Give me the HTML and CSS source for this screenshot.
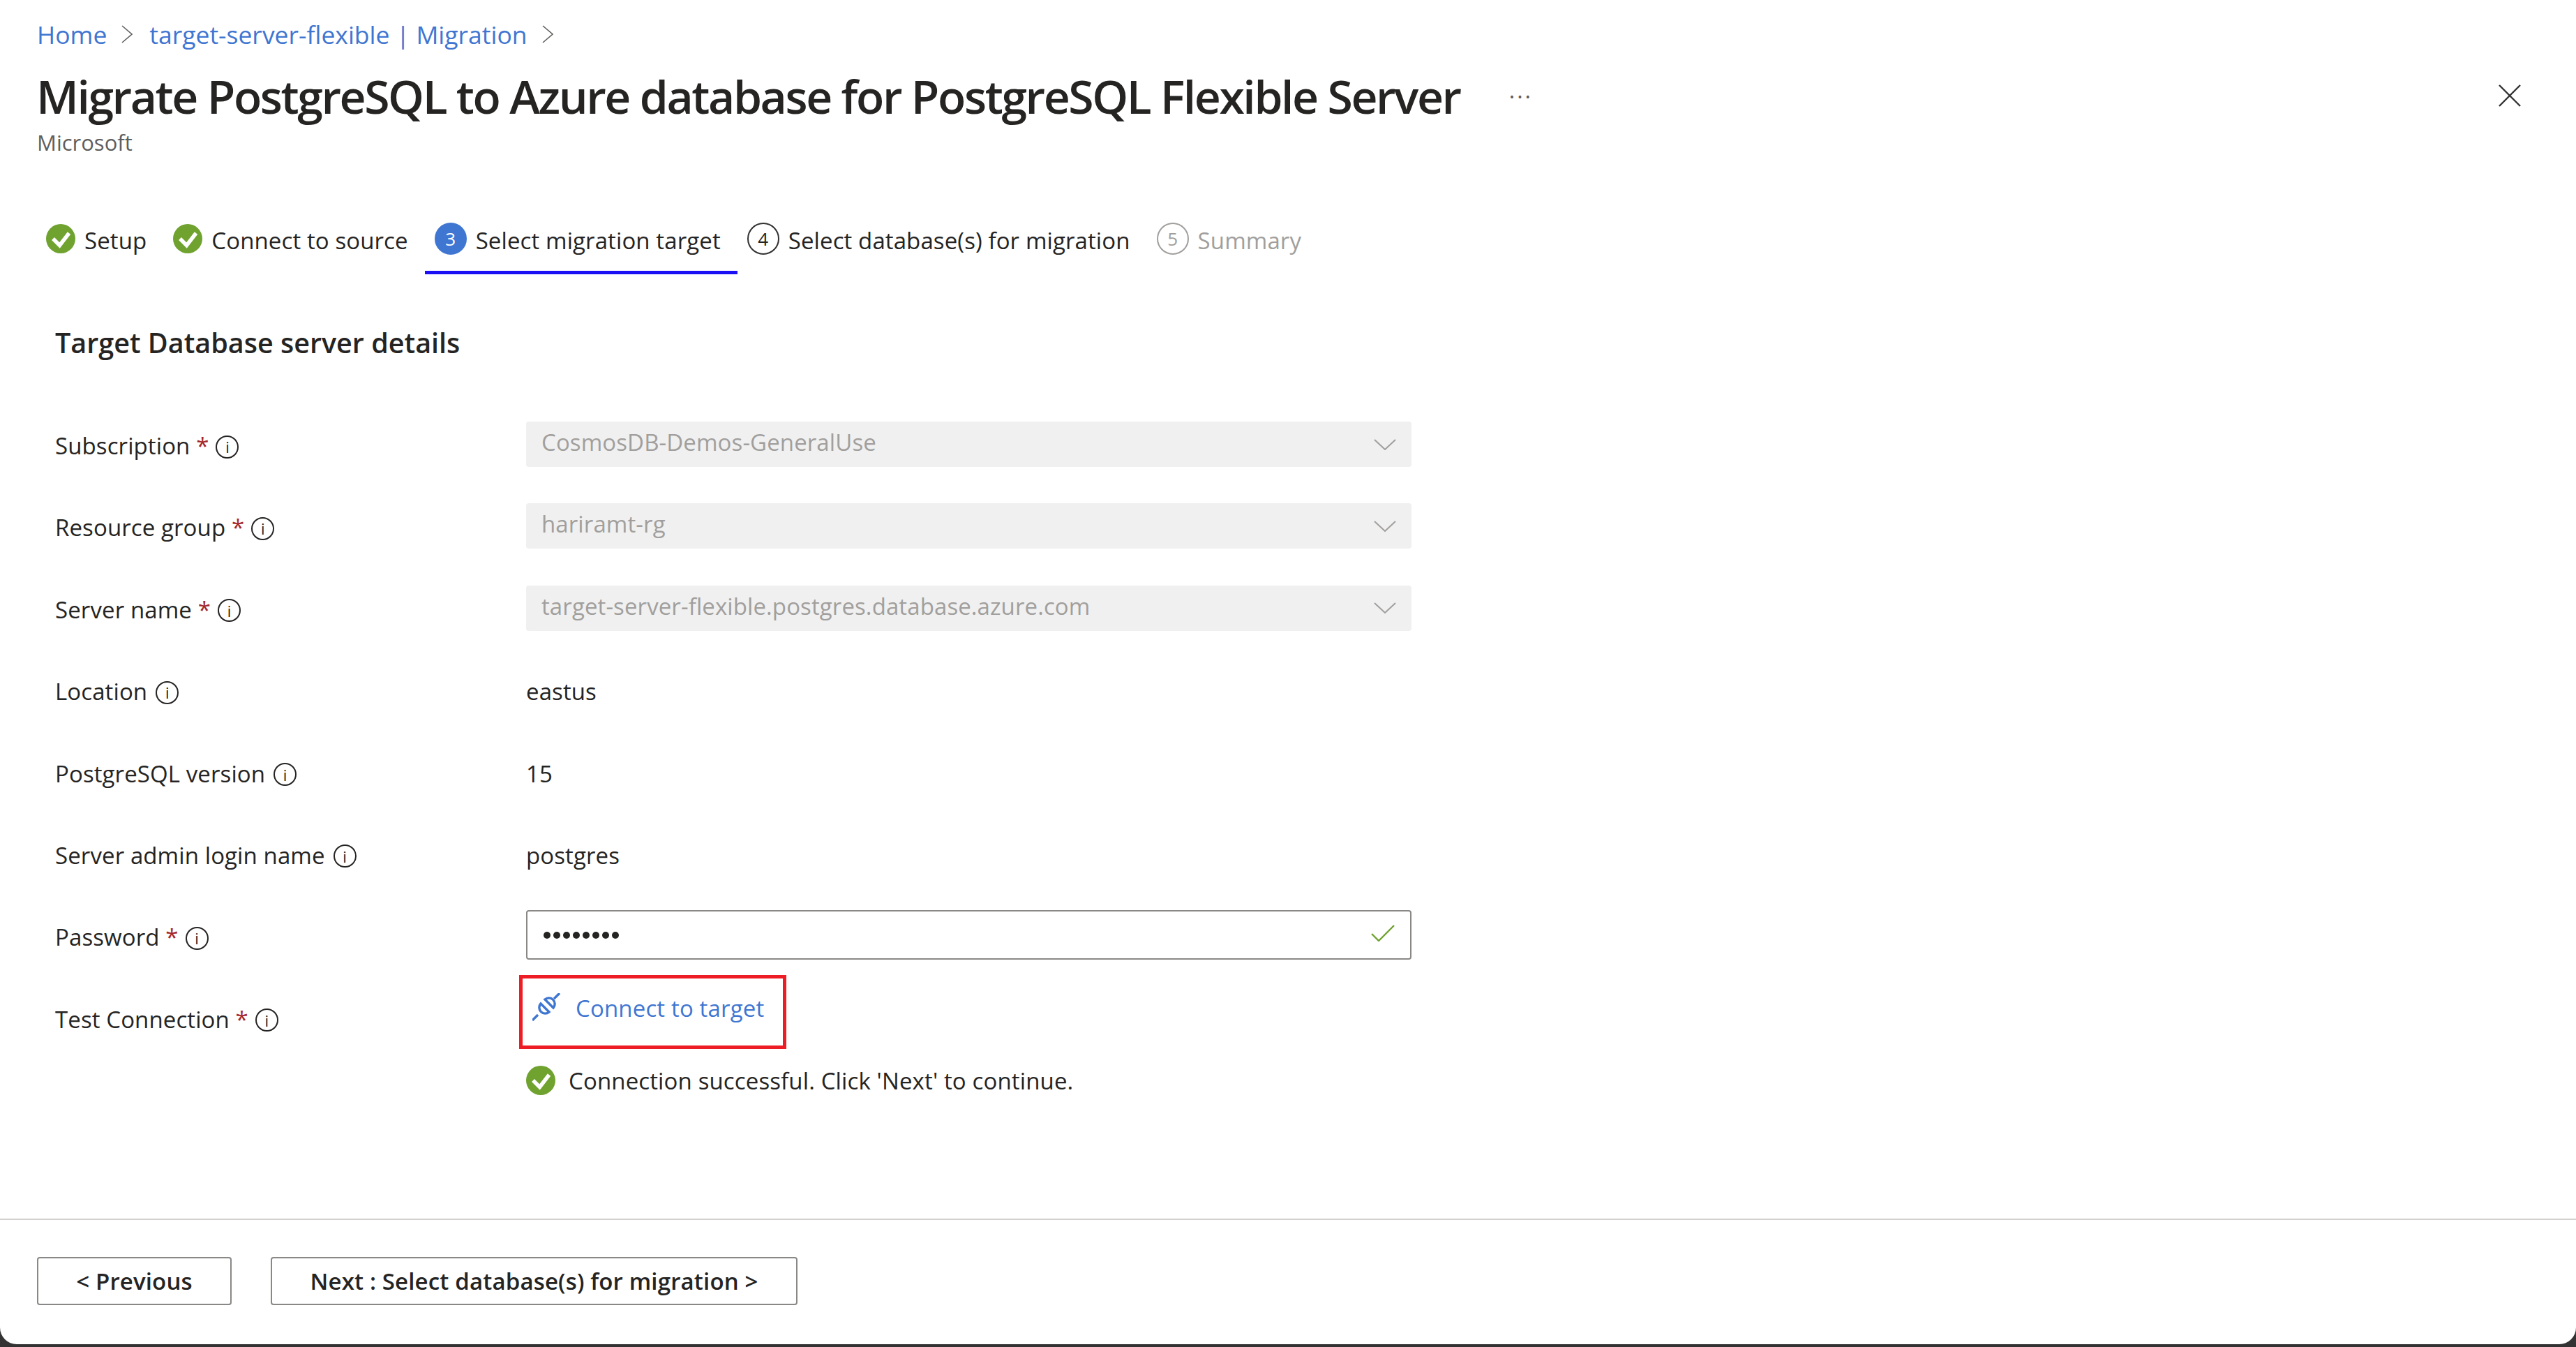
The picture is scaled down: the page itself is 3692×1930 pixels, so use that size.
FILE: index.html
```html
<!DOCTYPE html>
<html lang="en">
<head>
<meta charset="utf-8">
<title>Migrate PostgreSQL</title>
<link rel="stylesheet" href="styles.css">
</head>
<body>
<div class="page">
  <header class="head">
    <nav class="crumbs">
      <a class="crumb">Home</a>
      <svg class="crumb-sep" viewBox="0 0 16 26"><path d="M1 1l14 12L1 25"/></svg>
      <a class="crumb">target-server-flexible | Migration</a>
      <svg class="crumb-sep" viewBox="0 0 16 26"><path d="M1 1l14 12L1 25"/></svg>
    </nav>
    <div class="title-row">
      <h1 class="title">Migrate PostgreSQL to Azure database for PostgreSQL Flexible Server</h1>
      <span class="more">···</span>
      <svg class="close" viewBox="0 0 32 32"><path d="M1 1l30 30M31 1L1 31"/></svg>
    </div>
    <div class="publisher">Microsoft</div>
  </header>

  <div class="tabs">
    <div class="tab">
      <svg class="ok" viewBox="0 0 42 42"><circle cx="21" cy="21" r="21"/><path d="M10 21l9.5 9.5L33 13"/></svg>
      <span class="tab-text">Setup</span>
    </div>
    <div class="tab">
      <svg class="ok" viewBox="0 0 42 42"><circle cx="21" cy="21" r="21"/><path d="M10 21l9.5 9.5L33 13"/></svg>
      <span class="tab-text">Connect to source</span>
    </div>
    <div class="tab tab-active">
      <span class="num num-active">3</span>
      <span class="tab-text">Select migration target</span>
    </div>
    <div class="tab">
      <span class="num">4</span>
      <span class="tab-text">Select database(s) for migration</span>
    </div>
    <div class="tab tab-off">
      <span class="num num-off">5</span>
      <span class="tab-text">Summary</span>
    </div>
  </div>

  <main class="body">
    <h2 class="section">Target Database server details</h2>
    <div class="form">
      <div class="label">Subscription <i class="req">*</i><span class="info">i</span></div>
      <div class="select"><span>CosmosDB-Demos-GeneralUse</span><svg class="chev" viewBox="0 0 32 16"><path d="M1 1l15 14L31 1"/></svg></div>

      <div class="label">Resource group <i class="req">*</i><span class="info">i</span></div>
      <div class="select"><span>hariramt-rg</span><svg class="chev" viewBox="0 0 32 16"><path d="M1 1l15 14L31 1"/></svg></div>

      <div class="label">Server name <i class="req">*</i><span class="info">i</span></div>
      <div class="select"><span>target-server-flexible.postgres.database.azure.com</span><svg class="chev" viewBox="0 0 32 16"><path d="M1 1l15 14L31 1"/></svg></div>

      <div class="label">Location<span class="info">i</span></div>
      <div class="value">eastus</div>

      <div class="label">PostgreSQL version<span class="info">i</span></div>
      <div class="value">15</div>

      <div class="label">Server admin login name<span class="info">i</span></div>
      <div class="value">postgres</div>

      <div class="label">Password <i class="req">*</i><span class="info">i</span></div>
      <div class="password">
        <div class="dots"><b></b><b></b><b></b><b></b><b></b><b></b><b></b><b></b></div>
        <svg class="tick" viewBox="0 0 34 24"><path d="M1 13l10 10L33 1"/></svg>
      </div>

      <div class="label label-test">Test Connection <i class="req">*</i><span class="info">i</span></div>
      <div class="test">
        <a class="connect">
          <svg class="plug" viewBox="0 0 40 40"><path d="M0 39l8-8M39 0l-8 8M12 15l12 12A8.5 8.5 0 0 1 12 15zM18 9l12 12A8.5 8.5 0 0 0 18 9z"/></svg>
          <span>Connect to target</span>
        </a>
      </div>
      <div class="status">
        <svg class="ok" viewBox="0 0 42 42"><circle cx="21" cy="21" r="21"/><path d="M10 21l9.5 9.5L33 13"/></svg>
        <span>Connection successful. Click 'Next' to continue.</span>
      </div>
    </div>
  </main>

  <footer class="foot">
    <button class="btn btn-prev">&lt; Previous</button>
    <button class="btn btn-next">Next : Select database(s) for migration &gt;</button>
  </footer>
</div>
</body>
</html>
```
FILE: styles.css
```css
* { box-sizing: border-box; }
html, body { margin: 0; height: 100%; }
body {
  background: #333333;
  font-family: "Open Sans", "Noto Sans", sans-serif;
  font-size: 33px;
  letter-spacing: 0.1px;
  color: #252423;
  overflow: hidden;
}
.page {
  height: 1926px;
  background: #ffffff;
  border-radius: 0 0 24px 24px;
  display: flex;
  flex-direction: column;
}
.head { padding: 23px 53px 0; }
.crumbs { display: flex; align-items: center; height: 52px; font-size: 35.5px; letter-spacing: 0; }
.crumb { color: #3f76d1; }
.crumb-sep { width: 16px; height: 26px; margin: 0 24px 0 21px; fill: none; stroke: #605e5c; stroke-width: 1.6; }
.title-row { display: flex; align-items: center; height: 90px; margin-top: 17px; }
.title { margin: 0 0 0 -1px; font-size: 66px; font-weight: 600; line-height: 90px; letter-spacing: -2.39px; color: #252423; white-space: nowrap; }
.more { margin-left: 70px; font-size: 32px; letter-spacing: 3px; color: #605e5c; }
.close { width: 32px; height: 32px; margin-left: auto; margin-right: 26px; fill: none; stroke: #323130; stroke-width: 2.4; }
.publisher { font-size: 31px; letter-spacing: 0; color: #605e5c; margin-top: 2px; line-height: 40px; }

.tabs { display: flex; height: 68px; margin-top: 101px; padding-left: 52px; }
.tab { display: flex; align-items: center; gap: 13px; height: 68px; padding: 0 24px 34px 14px; white-space: nowrap; }
.tab-text { margin-top: 4px; }
.tab-active { border-bottom: 5px solid #1b0ff5; padding-bottom: 29px; }
.ok { width: 42px; height: 42px; flex: none; }
.ok circle { fill: #6fa22e; }
.ok path { fill: none; stroke: #fff; stroke-width: 5.5; }
.num { width: 46px; height: 46px; border: 2px solid #323130; border-radius: 50%; display: flex; align-items: center; justify-content: center; font-size: 26px; letter-spacing: 0; flex: none; }
.num-active { background: #3f76d1; border-color: #3f76d1; color: #fff; }
.num-off { border-color: #a19f9d; color: #a19f9d; }
.tab-off { color: #a19f9d; }

.body { flex: 1; padding: 0 79px; }
.section { margin: 72px 0 0; font-size: 39.5px; line-height: 52px; font-weight: 600; letter-spacing: 0; }
.form { display: grid; grid-template-columns: 675px 1269px; grid-auto-rows: 117.4px; margin-top: 87px; }
.label { display: flex; align-items: center; height: 65px; white-space: pre; padding-top: 4px; }
.req { font-style: normal; color: #a4262c; margin-right: 10px; }
.info { width: 33px; height: 33px; margin-top: 3px; border: 2px solid #252423; border-radius: 50%; display: flex; align-items: center; justify-content: center; font-size: 22px; margin-left: 12px; letter-spacing: 0; font-style: normal; }
.req + .info { margin-left: 0; }
.select { height: 65px; background: #f0f0f0; border-radius: 4px; padding: 0 22px; display: flex; align-items: center; justify-content: space-between; color: #a19f9d; }
.select span { margin-top: -6px; }
.chev { width: 32px; height: 16px; fill: none; stroke: #a19f9d; stroke-width: 2; }
.value { height: 65px; display: flex; align-items: center; padding-top: 4px; }
.password { height: 71px; margin-top: -4px; border: 2px solid #8a8886; border-radius: 4px; padding: 0 22px; display: flex; align-items: center; justify-content: space-between; }
.dots { display: flex; gap: 4px; margin-left: 1px; }
.dots b { width: 10px; height: 10px; background: #252423; border-radius: 50%; }
.tick { width: 34px; height: 24px; margin-top: -6px; fill: none; stroke: #6fa22e; stroke-width: 2.4; }
.test { margin: -29px 0 0 -10px; height: 106px; }
.connect { display: inline-flex; align-items: flex-start; gap: 22px; height: 106px; width: 383px; border: 5px solid #ee1c25; padding: 21px 0 0 14px; color: #3f76d1; }
.plug { width: 40px; height: 40px; flex: none; fill: none; stroke: #3f76d1; stroke-width: 3.4; }
.connect span { margin-top: -1px; letter-spacing: 0.15px; }
.status { grid-column: 2; display: flex; align-items: center; gap: 19px; height: 42px; margin-top: -16px; letter-spacing: 0.13px; }

.foot { height: 180px; border-top: 2px solid #d2d0ce; display: flex; align-items: flex-start; gap: 56px; padding: 53px 53px 0; }
.btn { height: 69px; background: #fff; border: 2px solid #8a8886; border-radius: 4px; font-family: inherit; font-size: 33px; font-weight: 600; color: #252423; letter-spacing: 0.15px; }
.btn-prev { width: 279px; }
.btn-next { width: 755px; }
```
